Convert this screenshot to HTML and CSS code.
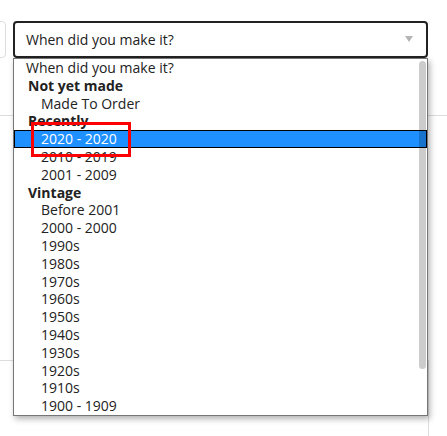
FILE: index.html
```html
<!DOCTYPE html>
<html>
<head>
<meta charset="utf-8">
<link rel="stylesheet" href="styles.css">
</head>
<body>
<div class="page">
  <div class="top-row">
    <div class="stub"></div>
    <div class="select-wrap">
      <div class="select">
        <span class="select-label">When did you make it?</span>
        <span class="caret"></span>
      </div>
      <div class="listbox">
        <div class="opt">When did you make it?</div>
        <div class="group">Not yet made</div>
        <div class="opt child">Made To Order</div>
        <div class="group">Recently</div>
        <div class="opt child selected">2020 - 2020</div>
        <div class="opt child">2010 - 2019</div>
        <div class="opt child">2001 - 2009</div>
        <div class="group">Vintage</div>
        <div class="opt child">Before 2001</div>
        <div class="opt child">2000 - 2000</div>
        <div class="opt child">1990s</div>
        <div class="opt child">1980s</div>
        <div class="opt child">1970s</div>
        <div class="opt child">1960s</div>
        <div class="opt child">1950s</div>
        <div class="opt child">1940s</div>
        <div class="opt child">1930s</div>
        <div class="opt child">1920s</div>
        <div class="opt child">1910s</div>
        <div class="opt child">1900 - 1909</div>
        <div class="thumb"></div>
      </div>
      <div class="annotation"></div>
    </div>
  </div>
  <div class="rule"></div>
  <div class="panel"></div>
</div>
</body>
</html>
```

FILE: styles.css
```css
html, body {
  margin: 0;
  padding: 0;
  background: #fff;
}

.page {
  width: 447px;
  height: 436px;
  overflow: hidden;
  font-family: "Open Sans", "Liberation Sans", sans-serif;
  color: #222;
}

.top-row {
  display: flex;
  gap: 7px;
  padding-top: 21px;
}

.stub {
  width: 14px;
  height: 35px;
  margin-left: -10px;
  border: 1px solid #ddd;
  border-radius: 4px;
}

.select-wrap {
  position: relative;
  width: 415px;
  z-index: 2;
}

.select {
  box-sizing: border-box;
  height: 37px;
  border: 2px solid #222;
  border-radius: 4px;
  display: flex;
  align-items: center;
  justify-content: space-between;
  padding: 0 13px 0 11px;
  font-size: 14px;
}

.select-label {
  padding-bottom: 1px;
}

.caret {
  width: 0;
  height: 0;
  border-left: 4px solid transparent;
  border-right: 4px solid transparent;
  border-top: 6px solid #b5b5b5;
  margin-bottom: 1px;
}

.listbox {
  position: absolute;
  top: 37px;
  left: 0;
  width: 415px;
  height: 358px;
  box-sizing: border-box;
  border: 1px solid #767676;
  background: #fff;
  box-shadow: 2px 3px 6px rgba(0, 0, 0, 0.3);
  font-size: 14px;
  line-height: 17.8px;
  overflow: hidden;
}

.opt,
.group {
  height: 17.8px;
  white-space: nowrap;
  box-sizing: border-box;
}

.opt {
  padding-left: 12px;
}

.group {
  padding-left: 14px;
  font-weight: 700;
}

.opt.child {
  padding-left: 27px;
}

.opt.selected {
  background: #1e90ff;
  color: #fff;
  outline: 1px solid #000;
  outline-offset: -1px;
}

.thumb {
  position: absolute;
  top: 2px;
  right: 1px;
  width: 7px;
  height: 308px;
  border-radius: 4px;
  background: rgba(0, 0, 0, 0.2);
}

.annotation {
  position: absolute;
  left: 18px;
  top: 101px;
  width: 94px;
  height: 29px;
  border: 3px solid #f00;
}

.rule {
  margin-top: 57px;
  height: 1px;
  background: #ddd;
  width: 100%;
}

.panel {
  margin-top: 244px;
  width: 428px;
  height: 100px;
  border-top: 1px solid #ddd;
  border-right: 1px solid #ddd;
}
```
